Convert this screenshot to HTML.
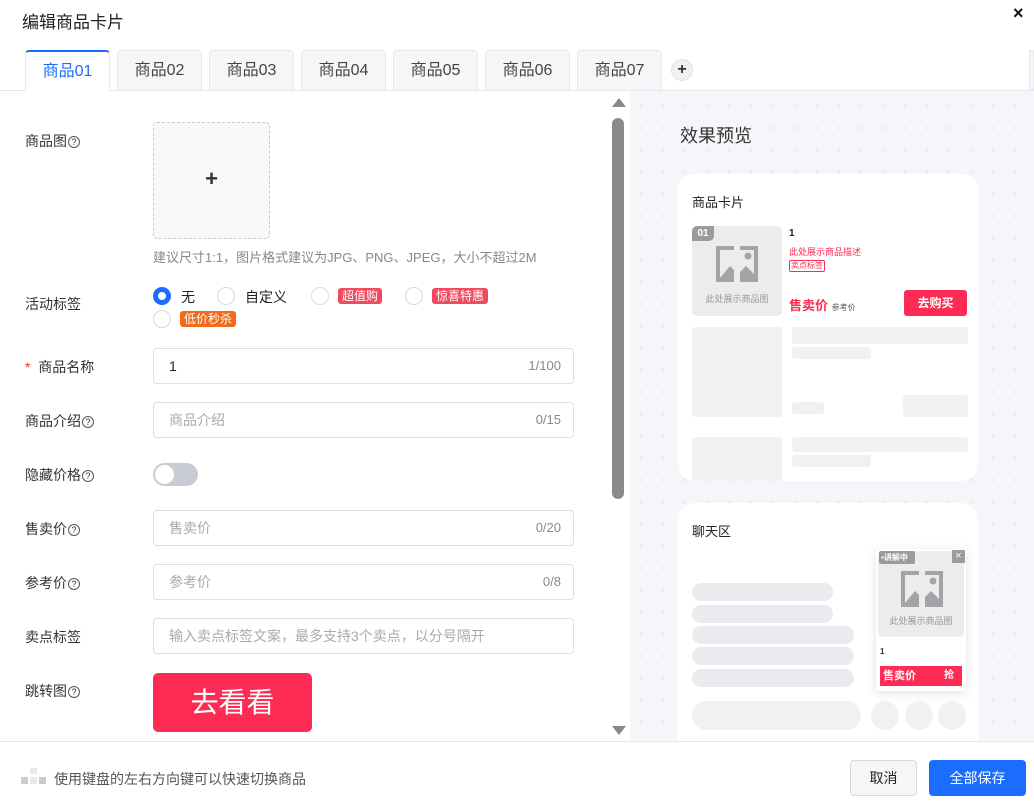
<!DOCTYPE html>
<html><head><meta charset="utf-8"><style>
*{box-sizing:border-box;margin:0;padding:0}
body{width:1034px;height:806px;overflow:hidden;background:#fff;font-family:"Liberation Sans","Noto Sans CJK SC",sans-serif;color:#333;position:relative}
.a{position:absolute}
.tab{position:absolute;top:50px;width:85px;height:40px;background:#f5f6f8;border:1px solid #e6e8eb;border-bottom:none;border-radius:4px 4px 0 0;font-size:16px;color:#444;text-align:center;line-height:39px}
.lbl{position:absolute;left:25px;font-size:14px;color:#333}
.q{display:inline-block;width:12px;height:12px;border:1px solid #555;border-radius:50%;font-size:9px;line-height:10px;text-align:center;vertical-align:1px;margin-left:1px}
.inp{position:absolute;left:153px;width:421px;height:36px;border:1px solid #dcdfe6;border-radius:4px;font-size:14px;line-height:34px;padding-left:15px;color:#aaa}
.inp .c{position:absolute;right:12px;top:0;color:#888;font-size:13px}
.rd{position:absolute;width:18px;height:18px;border:1px solid #d5d9e0;border-radius:50%;background:#fff}
.tg{position:absolute;font-size:12px;color:#fff;border-radius:3px;padding:0 4px;line-height:16px;height:16px}
.bar{position:absolute;background:#ececec;border-radius:3px}
.pill{position:absolute;background:#e9ebef;border-radius:10px;height:18px}
</style></head><body>
<div class="a" style="left:22px;top:8px;font-size:17px;color:#222">编辑商品卡片</div>
<div class="a" style="left:1013px;top:3px;font-size:18px;font-weight:bold;color:#111">×</div>
<div class="a" style="left:0;top:90px;width:1034px;height:1px;background:#e6e8eb"></div>
<div class="tab" style="left:25px;background:#fff;border:1px solid #e6e8eb;border-top:2px solid #1a6dff;border-bottom:none;color:#1a6dff;height:41px">商品01</div>
<div class="tab" style="left:117px">商品02</div>
<div class="tab" style="left:209px">商品03</div>
<div class="tab" style="left:301px">商品04</div>
<div class="tab" style="left:393px">商品05</div>
<div class="tab" style="left:485px">商品06</div>
<div class="tab" style="left:577px">商品07</div>
<div class="a" style="left:671px;top:59px;width:22px;height:22px;border-radius:50%;background:#f0f1f3;border:1px solid #e0e2e6;text-align:center;line-height:19px;font-size:16px;font-weight:bold;color:#333">+</div>
<div class="a" style="left:1029px;top:50px;width:5px;height:40px;background:#f5f6f8;border:1px solid #e6e8eb"></div>

<div class="lbl" style="top:131px">商品图<span class="q">?</span></div>
<div class="a" style="left:153px;top:122px;width:117px;height:117px;border:1px dashed #c8ccd3;border-radius:4px;background:#f7f8fa;text-align:center;line-height:112px;font-size:22px;font-weight:bold;color:#333">+</div>
<div class="a" style="left:153px;top:247px;font-size:13px;color:#888">建议尺寸1:1，图片格式建议为JPG、PNG、JPEG，大小不超过2M</div>

<div class="lbl" style="top:294px">活动标签</div>
<div class="rd" style="left:153px;top:287px;border:5px solid #1a6dff"></div>
<div class="a" style="left:181px;top:287px;font-size:14px;color:#222">无</div>
<div class="rd" style="left:217px;top:287px"></div>
<div class="a" style="left:245px;top:287px;font-size:14px;color:#222">自定义</div>
<div class="rd" style="left:311px;top:287px"></div>
<div class="tg" style="left:338px;top:288px;background:#f04a5e">超值购</div>
<div class="rd" style="left:405px;top:287px"></div>
<div class="tg" style="left:432px;top:288px;background:#f04a5e">惊喜特惠</div>
<div class="rd" style="left:153px;top:310px"></div>
<div class="tg" style="left:180px;top:311px;background:#f26b1d">低价秒杀</div>

<div class="lbl" style="top:357px"><span style="color:#e33">*</span>&nbsp; 商品名称</div>
<div class="inp" style="top:348px;color:#222">1<span class="c">1/100</span></div>
<div class="lbl" style="top:411px">商品介绍<span class="q">?</span></div>
<div class="inp" style="top:402px">商品介绍<span class="c">0/15</span></div>
<div class="lbl" style="top:465px">隐藏价格<span class="q">?</span></div>
<div class="a" style="left:153px;top:463px;width:45px;height:23px;border-radius:12px;background:#c9ccd3"><div class="a" style="left:2px;top:2px;width:19px;height:19px;border-radius:50%;background:#fff"></div></div>
<div class="lbl" style="top:519px">售卖价<span class="q">?</span></div>
<div class="inp" style="top:510px">售卖价<span class="c">0/20</span></div>
<div class="lbl" style="top:573px">参考价<span class="q">?</span></div>
<div class="inp" style="top:564px">参考价<span class="c">0/8</span></div>
<div class="lbl" style="top:627px">卖点标签</div>
<div class="inp" style="top:618px">输入卖点标签文案，最多支持3个卖点，以分号隔开</div>
<div class="lbl" style="top:681px">跳转图<span class="q">?</span></div>
<div class="a" style="left:153px;top:673px;width:159px;height:59px;background:#fe2c55;border-radius:5px;color:#fff;font-size:28px;text-align:center;line-height:59px">去看看</div>

<div class="a" style="left:612px;top:98px;width:0;height:0;border-left:7px solid transparent;border-right:7px solid transparent;border-bottom:9px solid #888"></div>
<div class="a" style="left:612px;top:118px;width:12px;height:381px;border-radius:6px;background:#8a8a8a"></div>
<div class="a" style="left:612px;top:726px;width:0;height:0;border-left:7px solid transparent;border-right:7px solid transparent;border-top:9px solid #888"></div>

<div class="a" style="left:630px;top:91px;width:404px;height:650px;background-color:#f5f6fa;background-image:radial-gradient(circle,#eaecf0 1.5px,transparent 2px);background-size:22px 22px;background-position:0 4px"></div>
<div class="a" style="left:680px;top:122px;font-size:18px;color:#333">效果预览</div>
<div class="a" style="left:678px;top:174px;width:300px;height:307px;background:#fff;border-radius:16px;overflow:hidden">
 <div class="a" style="left:14px;top:18px;font-size:13px;color:#222">商品卡片</div>
 <div class="a" style="left:14px;top:52px;width:90px;height:90px;background:#ececec;border-radius:5px">
  <div class="a" style="left:0;top:0;width:22px;height:15px;background:#9b9b9f;border-radius:5px 0 5px 0;color:#fff;font-size:10px;font-weight:bold;text-align:center;line-height:15px">01</div>
  <svg class="a" style="left:22px;top:18px" width="46" height="40" viewBox="0 0 46 40"><path d="M2 2H20V6H6V34H20V38H2Z M26 2H44V38H26V34H40V6H26Z" fill="#a4a4a8"/><path d="M6 34 L16 22 L20 26 V34Z M26 34 V28 L32 22 L40 30 V34Z" fill="#a4a4a8"/><circle cx="34" cy="12" r="3.5" fill="#a4a4a8"/></svg>
  <div class="a" style="left:0;top:66px;width:90px;text-align:center;font-size:9px;color:#999">此处展示商品图</div>
 </div>
 <div class="a" style="left:111px;top:54px;font-size:10px;font-weight:bold;color:#222">1</div>
 <div class="a" style="left:111px;top:71px;font-size:9px;color:#fe2c55">此处展示商品描述</div>
 <div class="a" style="left:111px;top:86px;font-size:8px;color:#fe2c55;border:1px solid #fe2c55;border-radius:2px;padding:0 1px;line-height:10px">卖点标签</div>
 <div class="a" style="left:111px;top:121px;font-size:13px;font-weight:bold;color:#fe2c55">售卖价 <span style="font-size:8px;color:#555;font-weight:normal">参考价</span></div>
 <div class="a" style="left:226px;top:116px;width:63px;height:26px;background:#fe2c55;border-radius:3px;color:#fff;font-size:12px;font-weight:bold;text-align:center;line-height:26px">去购买</div>
 <div class="bar" style="left:14px;top:153px;width:90px;height:90px;background:#f1f1f1"></div>
 <div class="bar" style="left:114px;top:153px;width:176px;height:17px;background:#f1f1f1"></div>
 <div class="bar" style="left:114px;top:173px;width:79px;height:12px;background:#f1f1f1"></div>
 <div class="bar" style="left:114px;top:228px;width:32px;height:12px;background:#f1f1f1"></div>
 <div class="bar" style="left:225px;top:221px;width:65px;height:22px;background:#f1f1f1"></div>
 <div class="bar" style="left:14px;top:263px;width:90px;height:60px;background:#f1f1f1"></div>
 <div class="bar" style="left:114px;top:263px;width:176px;height:15px;background:#f1f1f1"></div>
 <div class="bar" style="left:114px;top:281px;width:79px;height:12px;background:#f1f1f1"></div>
</div>
<div class="a" style="left:678px;top:503px;width:300px;height:260px;background:#fff;border-radius:16px;overflow:hidden">
 <div class="a" style="left:14px;top:18px;font-size:13px;color:#222">聊天区</div>
 <div class="pill" style="left:14px;top:80px;width:141px"></div>
 <div class="pill" style="left:14px;top:102px;width:141px"></div>
 <div class="pill" style="left:14px;top:123px;width:162px"></div>
 <div class="pill" style="left:14px;top:144px;width:162px"></div>
 <div class="pill" style="left:14px;top:166px;width:162px"></div>
 <div class="a" style="left:14px;top:198px;width:169px;height:29px;border-radius:15px;background:#f1f1f1"></div>
 <div class="a" style="left:193px;top:198px;width:28px;height:29px;border-radius:50%;background:#f1f1f1"></div>
 <div class="a" style="left:227px;top:198px;width:28px;height:29px;border-radius:50%;background:#f1f1f1"></div>
 <div class="a" style="left:260px;top:198px;width:28px;height:29px;border-radius:50%;background:#f1f1f1"></div>
 <div class="a" style="left:198px;top:46px;width:90px;height:142px;background:#fff;box-shadow:0 2px 10px rgba(0,0,0,.12)">
  <div class="a" style="left:2px;top:2px;width:86px;height:86px;background:#ececec;border-radius:5px">
   <div class="a" style="left:1px;top:0;width:36px;height:13px;background:#9b9b9f;border-radius:2px;color:#fff;font-size:8px;font-weight:bold;line-height:13px;padding-left:2px">▪讲解中</div>
   <div class="a" style="right:-1px;top:-1px;width:13px;height:13px;background:#9b9b9f;color:#fff;font-size:11px;line-height:12px;text-align:center">×</div>
   <svg class="a" style="left:21px;top:18px" width="46" height="40" viewBox="0 0 46 40"><path d="M2 2H20V6H6V34H20V38H2Z M26 2H44V38H26V34H40V6H26Z" fill="#a4a4a8"/><path d="M6 34 L16 22 L20 26 V34Z M26 34 V28 L32 22 L40 30 V34Z" fill="#a4a4a8"/><circle cx="34" cy="12" r="3.5" fill="#a4a4a8"/></svg>
   <div class="a" style="left:0;top:63px;width:86px;text-align:center;font-size:9px;color:#999">此处展示商品图</div>
  </div>
  <div class="a" style="left:4px;top:98px;font-size:8px;font-weight:bold">1</div>
  <div class="a" style="left:4px;top:117px;width:82px;height:20px;background:#fe2c55;color:#fff;font-size:11px;font-weight:bold;line-height:20px;padding-left:3px">售卖价<span style="position:absolute;right:8px;font-size:10px">抢</span></div>
 </div>
</div>

<div class="a" style="left:0;top:741px;width:1034px;height:1px;background:#e6e8eb"></div>
<div class="a" style="left:21px;top:768px;width:26px;height:18px">
 <div class="a" style="left:9px;top:0;width:7px;height:6px;background:#e8e9ec"></div>
 <div class="a" style="left:0;top:9px;width:7px;height:7px;background:#c9ccd2"></div>
 <div class="a" style="left:9px;top:9px;width:7px;height:7px;background:#e8e9ec"></div>
 <div class="a" style="left:18px;top:9px;width:7px;height:7px;background:#c9ccd2"></div>
</div>
<div class="a" style="left:54px;top:769px;font-size:14px;color:#555">使用键盘的左右方向键可以快速切换商品</div>
<div class="a" style="left:850px;top:760px;width:67px;height:36px;border:1px solid #d5d8de;border-radius:4px;background:#f5f6f8;font-size:14px;text-align:center;line-height:34px;color:#222">取消</div>
<div class="a" style="left:929px;top:760px;width:97px;height:36px;border-radius:4px;background:#1a6dff;font-size:14px;text-align:center;line-height:36px;color:#fff">全部保存</div>
</body></html>
